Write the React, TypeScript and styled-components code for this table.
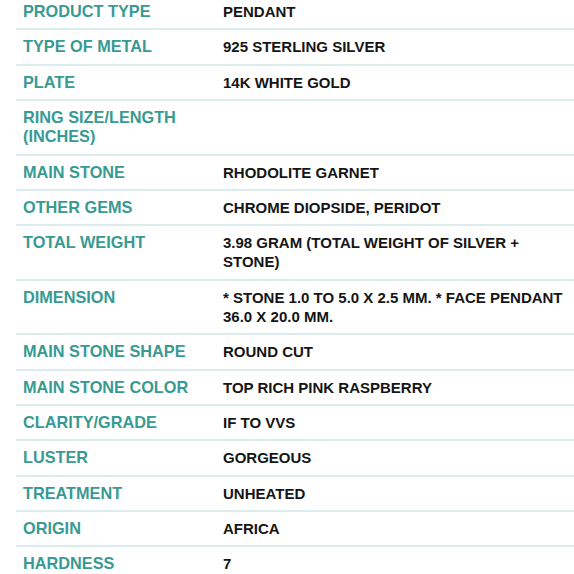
import styled, { createGlobalStyle } from "styled-components"

const Global = createGlobalStyle`
    html, body {
        margin: 0;
        padding: 0;
        background: #fff;
        overflow: hidden;
    }
    body {
        font-family: "Liberation Sans", Arial, sans-serif;
    }
`

const Table = styled.div`
    width: 574px;
    margin-top: -5px;
    padding-left: 16px;
    box-sizing: border-box;
`

const Row = styled.div`
    display: grid;
    grid-template-columns: 200px 1fr;
    padding: 7px 2px 7.4px 7px;
    border-bottom: solid 2px #dcebeb;
    line-height: 19px;
    &:last-child{
        border-bottom: 0;
    }
`

const Label = styled.div`
    color: #389a92;
    font-weight: bold;
    font-size: 16.3px;
    padding-right: 12px;
`

const Value = styled.div`
    color: #151515;
    font-weight: bold;
    font-size: 15px;
`

const specs: [string, string][] = [
    ["PRODUCT TYPE", "PENDANT"],
    ["TYPE OF METAL", "925 STERLING SILVER"],
    ["PLATE", "14K WHITE GOLD"],
    ["RING SIZE/LENGTH (INCHES)", ""],
    ["MAIN STONE", "RHODOLITE GARNET"],
    ["OTHER GEMS", "CHROME DIOPSIDE, PERIDOT"],
    ["TOTAL WEIGHT", "3.98 GRAM (TOTAL WEIGHT OF SILVER + STONE)"],
    ["DIMENSION", "* STONE 1.0 TO 5.0 X 2.5 MM. * FACE PENDANT 36.0 X 20.0 MM."],
    ["MAIN STONE SHAPE", "ROUND CUT"],
    ["MAIN STONE COLOR", "TOP RICH PINK RASPBERRY"],
    ["CLARITY/GRADE", "IF TO VVS"],
    ["LUSTER", "GORGEOUS"],
    ["TREATMENT", "UNHEATED"],
    ["ORIGIN", "AFRICA"],
    ["HARDNESS", "7"],
]

function App () {
    return(
        <>
            <Global/>
            <Table>
                {specs.map(([label, value]) => (
                    <Row key={label}>
                        <Label>{label}</Label>
                        <Value>{value}</Value>
                    </Row>
                ))}
            </Table>
        </>
    )
}
export default App
